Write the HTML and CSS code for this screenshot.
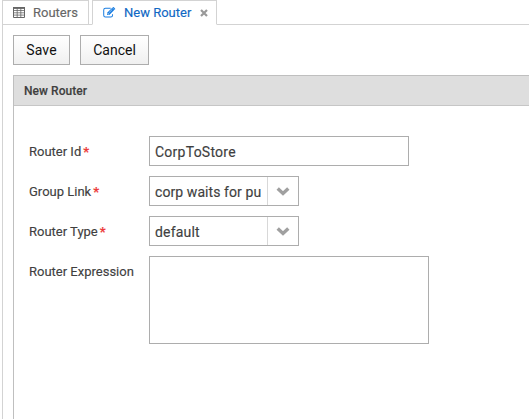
FILE: index.html
```html
<!DOCTYPE html>
<html lang="en">
<head>
<meta charset="utf-8">
<title>New Router</title>
<link rel="stylesheet" href="styles.css">
</head>
<body>
<nav class="tabs">
  <div class="tab tab-routers">
    <svg class="table-icon" width="12" height="11" viewBox="0 0 12 11"><path d="M.5 1h11v9.500H.5z" fill="none" stroke="currentColor"/><path d="M0 .9h12" stroke="currentColor" stroke-width="1.800"/><path d="M.5 3.500h11M.5 5.800h11M.5 8.100h11M4.200 1v9.500M7.800 1v9.500" stroke="currentColor" stroke-width=".8"/></svg>
    <span class="tab-label">Routers</span>
  </div>
  <div class="tab-gap"></div>
  <div class="tab tab-active">
    <svg class="edit-icon" width="13" height="11" viewBox="0 0 14 12"><path d="M8.300 1.300H2.600Q.7 1.300 .7 3.200V9Q.7 10.900 2.600 10.900H8.400Q10.300 10.900 10.300 9V7.800" fill="none" stroke="currentColor" stroke-width="1.100"/><path d="M10 .8 12.400 3.100 6.800 8.700H4.400V6.300zM10.600 .3Q11.200-.2 11.800.3L13 1.500Q13.500 2.100 13 2.600L12.700 2.900 10.200.6z" fill="currentColor"/><path d="M5.300 6.500V7.800H6.600M6.500 6.100 10 2.600" fill="none" stroke="#fff" stroke-width=".6"/></svg>
    <span class="tab-label">New Router</span>
    <svg class="close-icon" width="8" height="8" viewBox="0 0 8 8"><path d="M1 1 7 7M7 1 1 7" stroke="currentColor" stroke-width="2.200"/></svg>
  </div>
  <div class="tab-gap tab-rest"></div>
</nav>
<main class="content">
  <div class="toolbar">
    <button class="button button-save">Save</button>
    <button class="button button-cancel">Cancel</button>
  </div>
  <section class="panel">
    <h1 class="panel-title">New Router</h1>
    <div class="form">
      <div class="row">
        <div class="label">Router Id<span class="required">*</span></div>
        <div class="field">CorpToStore</div>
      </div>
      <div class="row">
        <div class="label">Group Link<span class="required">*</span></div>
        <div class="field select"><span class="value">corp waits for pu</span><span class="arrow"><svg width="14" height="10" viewBox="0 0 14 10"><path d="M1.700 2.500 7 7.500 12.300 2.500" fill="none" stroke="currentColor" stroke-width="3.400"/></svg></span></div>
      </div>
      <div class="row">
        <div class="label">Router Type<span class="required">*</span></div>
        <div class="field select"><span class="value value-default">default</span><span class="arrow"><svg width="14" height="10" viewBox="0 0 14 10"><path d="M1.700 2.500 7 7.500 12.300 2.500" fill="none" stroke="currentColor" stroke-width="3.400"/></svg></span></div>
      </div>
      <div class="row">
        <div class="label">Router Expression</div>
        <div class="field area"></div>
      </div>
    </div>
  </section>
</main>
</body>
</html>
```
FILE: styles.css
```css
* { box-sizing: border-box; }
body {
  margin: 0;
  height: 419px;
  overflow: hidden;
  display: flex;
  flex-direction: column;
  background: #fff;
  color: #3f3f3f;
  font-family: Roboto, sans-serif;
  font-size: 14px;
  -webkit-text-stroke: .15px;
}
svg { display: block; flex: none; }
.tabs { display: flex; height: 25px; margin-left: 2px; }
.tab {
  display: flex;
  align-items: center;
  border: 1px solid #d3d3d3;
  color: #666;
  font-size: 13px;
  white-space: nowrap;
}
.tab-label { line-height: 23px; }
.tab-routers { width: 87px; padding-left: 10px; }
.tab-routers .tab-label { margin-left: 8px; }
.tab-active {
  width: 125px;
  padding-left: 10px;
  border-bottom-color: transparent;
  color: #197de1;
}
.tab-active .tab-label { margin-left: 8px; color: #1068c4; }
.close-icon { margin: 1px 0 0 9px; color: #999; }
.tab-gap { width: 3px; border-bottom: 1px solid #d3d3d3; }
.tab-rest { flex: 1; }
.content {
  flex: 1;
  margin-left: 2px;
  padding: 10px 0 0 10px;
  border-left: 1px solid #d3d3d3;
  display: flex;
  flex-direction: column;
}
.toolbar { display: flex; gap: 10px; margin-bottom: 10px; }
.button {
  height: 30px;
  padding: 0;
  border: 1px solid #adadad;
  background: linear-gradient(#fff, #f0f0f0);
  color: #111;
  font: 14px Roboto, sans-serif;
  -webkit-text-stroke: 0;
}
.button-save { width: 57px; letter-spacing: .2px; }
.button-cancel { width: 69px; }
.panel { flex: 1; border: solid #bfbfbf; border-width: 1px 0 0 1px; }
.panel-title {
  margin: 0;
  height: 30px;
  padding-left: 10px;
  border-bottom: 1px solid #c6c6c6;
  background: #dedede;
  font-size: 12px;
  font-weight: 500;
  letter-spacing: .05px;
  line-height: 30px;
}
.form { display: flex; flex-direction: column; gap: 10px; padding: 30px 0 0 15px; }
.row { display: flex; }
.label { width: 120px; height: 30px; font-size: 13px; line-height: 31px; white-space: nowrap; }
.required { margin-left: 2px; color: #ed3b3b; font-size: 13px; font-weight: 700; line-height: 1; }
.field {
  width: 260px;
  height: 30px;
  padding-left: 5px;
  border: 1px solid #adadad;
  letter-spacing: .25px;
  line-height: 30px;
  white-space: nowrap;
}
.select { display: flex; width: 150px; letter-spacing: .08px; }
.value { width: 112px; overflow: hidden; }
.value-default { letter-spacing: .2px; }
.arrow {
  width: 31px;
  display: flex;
  align-items: center;
  justify-content: center;
  border-left: 1px solid #d8d8d8;
  color: #a0a0a0;
}
.area { width: 280px; height: 88px; }
```
